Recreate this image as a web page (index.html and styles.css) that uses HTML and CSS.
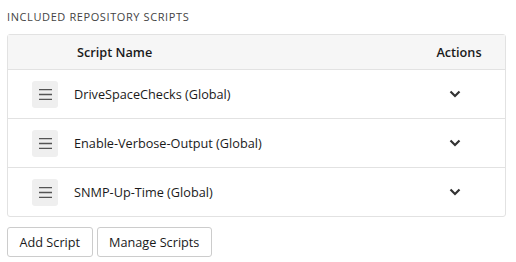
FILE: index.html
```html
<!DOCTYPE html>
<html lang="en">
<head>
    <meta charset="UTF-8">
    <title>Included Repository Scripts</title>
    <link rel="stylesheet" href="styles.css">
</head>
<body>
    <div id="outer">
        <div class="caption">Included Repository Scripts</div>
        <table class="scripts">
            <col class="wh">
            <col>
            <col class="wa">
            <thead>
                <tr>
                    <th></th>
                    <th class="al">Script Name</th>
                    <th class="ac">Actions</th>
                </tr>
            </thead>
            <tbody>
                <tr>
                    <td><span class="handle"><svg width="13" height="11" viewBox="0 0 13 11"><path d="M0 1h13M0 6h13M0 11h13" stroke="#555" stroke-width="1.6" transform="translate(0,-0.5)"/></svg></span></td>
                    <td>DriveSpaceChecks (Global)</td>
                    <td><svg class="chev" width="12" height="8" viewBox="0 0 12 8"><path d="M1.5 1.5l4.5 4.5l4.5-4.5" fill="none" stroke="#333" stroke-width="2.2"/></svg></td>
                </tr>
                <tr>
                    <td><span class="handle"><svg width="13" height="11" viewBox="0 0 13 11"><path d="M0 1h13M0 6h13M0 11h13" stroke="#555" stroke-width="1.6" transform="translate(0,-0.5)"/></svg></span></td>
                    <td>Enable-Verbose-Output (Global)</td>
                    <td><svg class="chev" width="12" height="8" viewBox="0 0 12 8"><path d="M1.5 1.5l4.5 4.5l4.5-4.5" fill="none" stroke="#333" stroke-width="2.2"/></svg></td>
                </tr>
                <tr>
                    <td><span class="handle"><svg width="13" height="11" viewBox="0 0 13 11"><path d="M0 1h13M0 6h13M0 11h13" stroke="#555" stroke-width="1.6" transform="translate(0,-0.5)"/></svg></span></td>
                    <td>SNMP-Up-Time (Global)</td>
                    <td><svg class="chev" width="12" height="8" viewBox="0 0 12 8"><path d="M1.5 1.5l4.5 4.5l4.5-4.5" fill="none" stroke="#333" stroke-width="2.2"/></svg></td>
                </tr>
            </tbody>
        </table>
        <div class="buttons">
            <button type="button">Add Script</button>
            <button type="button">Manage Scripts</button>
        </div>
    </div>
</body>
</html>
```
FILE: styles.css
```css
body {
    margin: 0;
    background: #fff;
    font-family: "Open Sans", "Liberation Sans", sans-serif;
    color: #1a1a1a;
}
#outer {
    padding: 10px 10px 0 7px;
}
.caption {
    font-size: 11px;
    text-transform: uppercase;
    letter-spacing: 0.6px;
    color: #444;
    line-height: 14px;
    margin-bottom: 10px;
}
.scripts {
    width: 100%;
    border-collapse: separate;
    border-spacing: 0;
    border: 1px solid #e2e2e2;
    border-radius: 3px;
    table-layout: fixed;
    font-size: 12.7px;
}
.wh {
    width: 66px;
}
.wa {
    width: 92px;
}
.scripts th {
    background: #f6f6f6;
    height: 34px;
    font-weight: 600;
    padding: 0;
    border-bottom: 1px solid #e2e2e2;
}
.scripts td {
    height: 48px;
    padding: 0;
    border-bottom: 1px solid #e2e2e2;
    vertical-align: middle;
}
.scripts tr:last-child td {
    border-bottom: 0;
}
.scripts th:first-child, .scripts td:first-child {
    padding-left: 24px;
}
.al {
    text-align: left;
    padding-left: 3px !important;
}
.ac {
    text-align: center;
}
.handle {
    display: flex;
    align-items: center;
    justify-content: center;
    width: 26px;
    height: 27px;
    background: #efefef;
    border-radius: 3px;
}
.chev {
    display: block;
    margin-left: 36px;
}
.buttons {
    display: flex;
    gap: 4px;
    margin-top: 10px;
}
.buttons button {
    font-family: inherit;
    font-size: 12.7px;
    color: #1a1a1a;
    background: #fff;
    border: 1px solid #ccc;
    border-radius: 3px;
    height: 30px;
    padding: 0 11.5px;
}
```
